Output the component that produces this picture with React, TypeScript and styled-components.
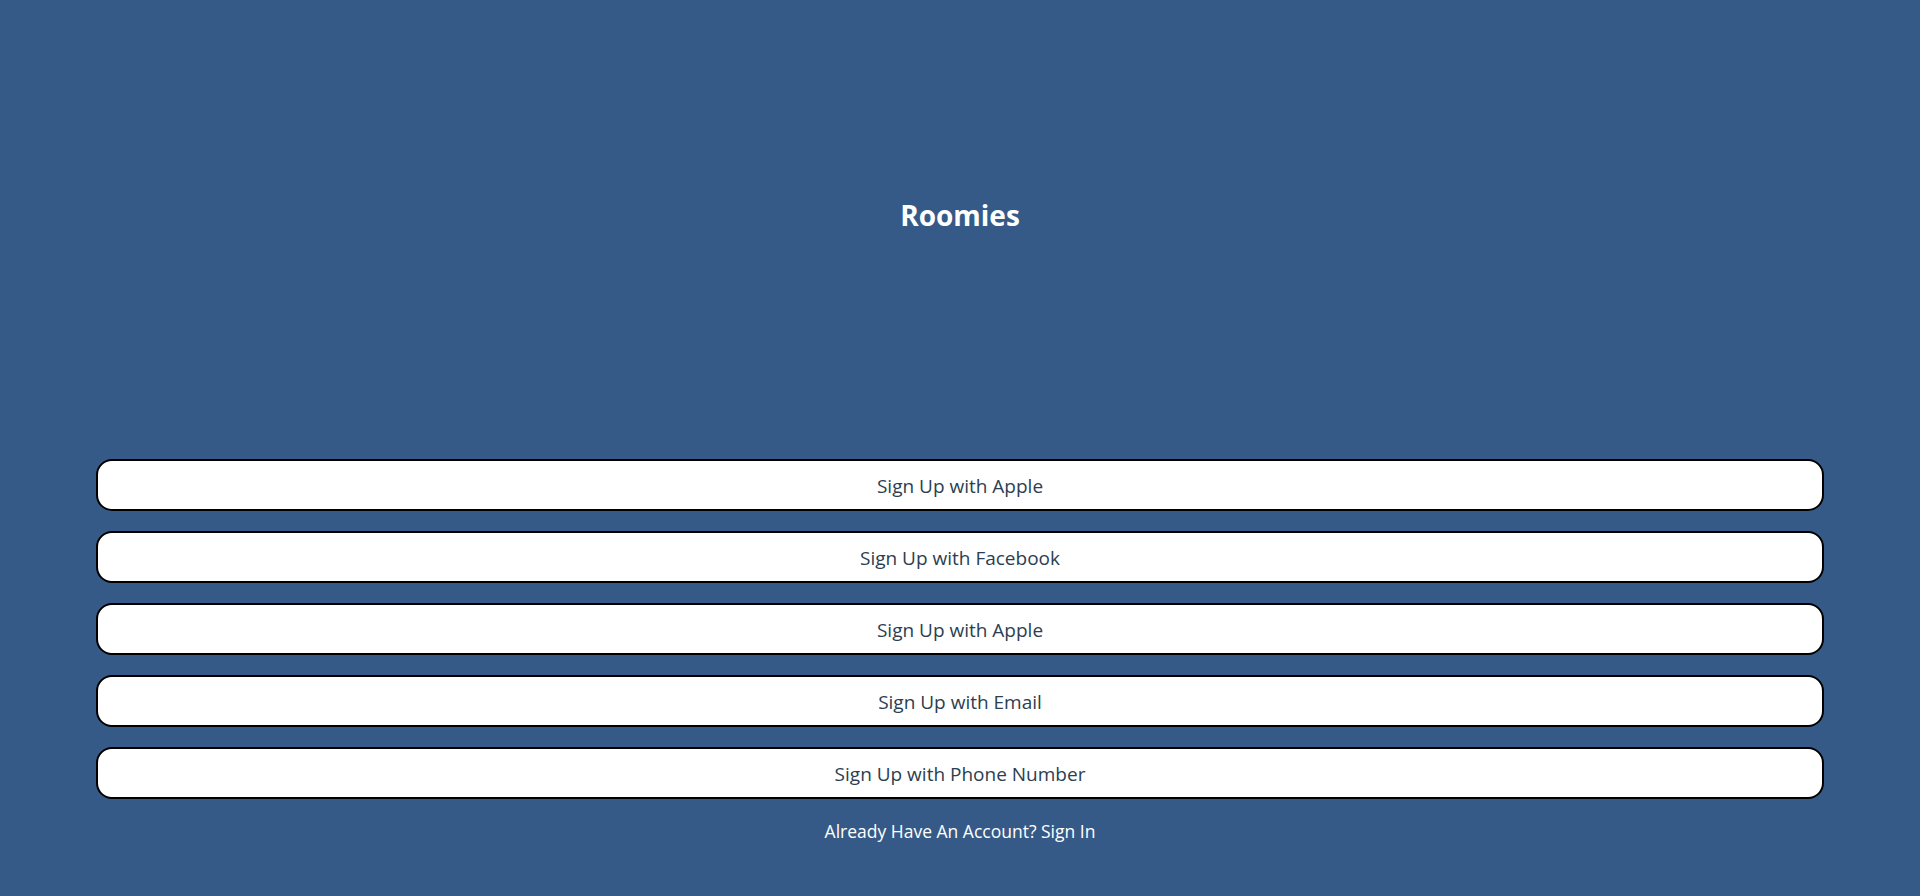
import React from "react";
import styled, { createGlobalStyle } from "styled-components";

const GlobalStyle = createGlobalStyle`
  html, body {
    margin: 0;
    padding: 0;
    background: #365a87;
  }
  body {
    font-family: "Open Sans", "Noto Sans", "Liberation Sans", sans-serif;
  }
`;

const Page = styled.div`
  min-height: 896px;
  display: flex;
  flex-direction: column;
  align-items: center;
  background: #365a87;
`;

const Title = styled.h1`
  margin: 0;
  padding-top: 195px;
  line-height: 40px;
  font-size: 28px;
  font-weight: 700;
  color: #ffffff;
`;

const ButtonList = styled.div`
  margin-top: 224px;
  width: 90%;
  display: flex;
  flex-direction: column;
  gap: 20px;
`;

const SignUpButton = styled.button`
  box-sizing: border-box;
  height: 52px;
  width: 100%;
  padding: 2px 0 0;
  background: #ffffff;
  border: 2px solid #000000;
  border-radius: 16px;
  font-family: inherit;
  font-size: 19px;
  color: #2c3e50;
  cursor: pointer;
`;

const Footer = styled.p`
  margin: 20px 0 0;
  line-height: 24px;
  font-size: 17.5px;
  color: #ffffff;
`;

const options = ["Apple", "Facebook", "Apple", "Email", "Phone Number"];

export default function App() {
  return (
    <>
      <GlobalStyle />
      <Page>
        <Title>Roomies</Title>
        <ButtonList>
          {options.map((o, i) => (
            <SignUpButton key={i}>Sign Up with {o}</SignUpButton>
          ))}
        </ButtonList>
        <Footer>Already Have An Account? Sign In</Footer>
      </Page>
    </>
  );
}
